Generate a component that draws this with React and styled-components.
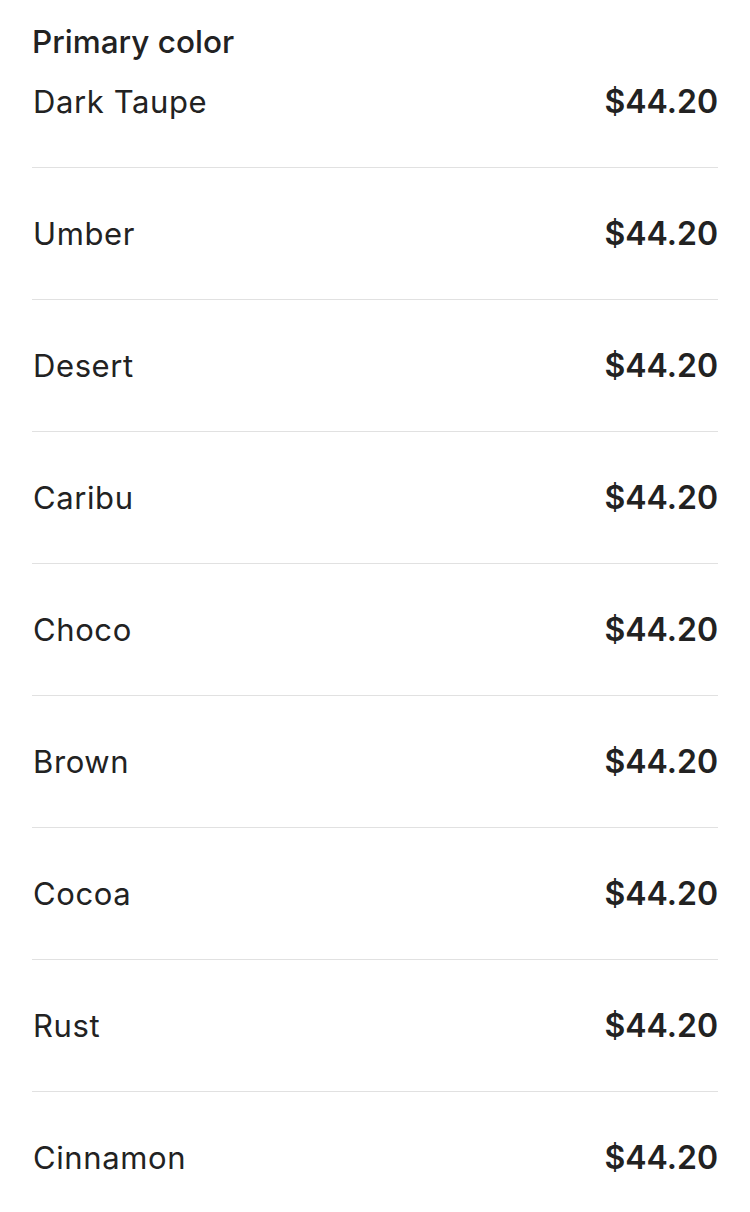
import React from 'react'
import styled, { createGlobalStyle } from "styled-components";

const GlobalStyle = createGlobalStyle`
  html, body {
    margin: 0;
    padding: 0;
    background: #fff;
  }
  body {
    font-family: Inter, "Noto Sans", Arial, sans-serif;
    color: #222;
  }
`;

const colors = [
  'Dark Taupe',
  'Umber',
  'Desert',
  'Caribu',
  'Choco',
  'Brown',
  'Cocoa',
  'Rust',
  'Cinnamon',
];

const App = () => {
  return (
    <Panel>
      <GlobalStyle />
      <Title>Primary color</Title>
      <List>
        {colors.map((name, i) => (
          <Row key={name} $first={i === 0}>
            <Name>{name}</Name>
            <Price>$44.20</Price>
          </Row>
        ))}
      </List>
    </Panel>
  )
}

const Panel = styled.section`
  width: 750px;
  min-height: 1212px;
  box-sizing: border-box;
  padding: 22px 32px 0 32px;
  background: #fff;
`;

const Title = styled.h2`
  margin: 0;
  font-size: 31.5px;
  line-height: 40px;
  font-weight: 500;
  color: #222;
`;

const List = styled.ul`
  list-style: none;
  margin: 0;
  padding: 0;
`;

const Row = styled.li`
  display: flex;
  justify-content: space-between;
  align-items: center;
  padding: ${p => (p.$first ? '20px 0 45px' : '46px 0 45px')};
  border-bottom: 1px solid #e1e1e1;
  &:last-child {
    border-bottom: none;
  }
`;

const Name = styled.span`
  font-size: 31px;
  line-height: 40px;
  font-weight: 400;
  letter-spacing: 0.6px;
  color: #222;
  padding-left: 1px;
`;

const Price = styled.span`
  font-size: 32px;
  line-height: 40px;
  font-weight: 600;
  color: #222;
`;

export default App;
